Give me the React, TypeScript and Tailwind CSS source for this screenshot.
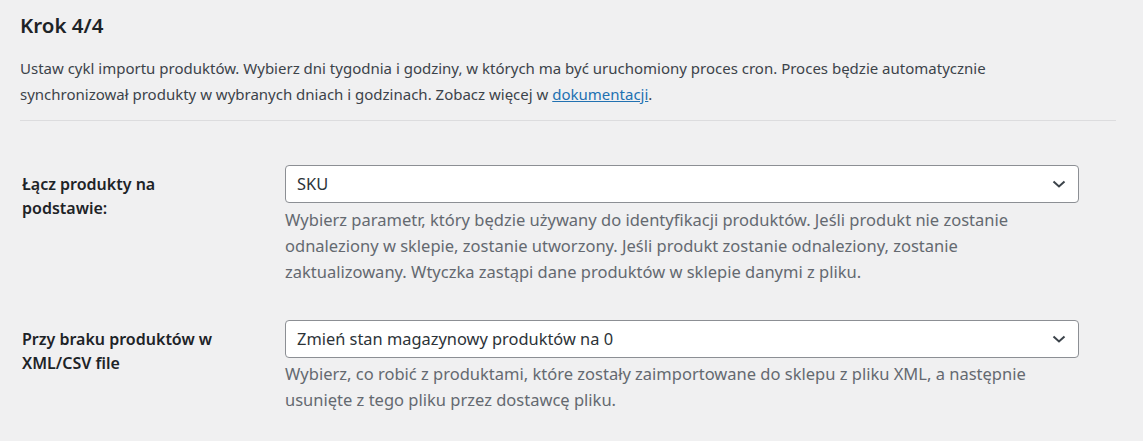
import React from 'react';

function Chevron() {
  return (
    <svg width="14" height="8" viewBox="0 0 14 8" className="absolute right-[12px] top-1/2 -translate-y-1/2">
      <path d="M1.5 1.5 L7 6.5 L12.5 1.5" fill="none" stroke="#3c434a" strokeWidth="2" />
    </svg>
  );
}

function SelectField({ value }: { value: string }) {
  return (
    <div className="relative h-[38px] w-[794px] rounded-[4px] border border-[#8c8f94] bg-white">
      <div className="flex h-full items-center pl-[11px] text-[16.4px] text-[#2c3338]">{value}</div>
      <Chevron />
    </div>
  );
}

export default function App() {
  return (
    <div className="min-h-[441px] w-[1143px] bg-[#f0f0f1] pl-[20px] pr-[27px] text-[#3c434a]" style={{ fontFamily: '"Noto Sans", "Open Sans", sans-serif' }}>
      <h2 className="pt-[12px] text-[20.5px] font-semibold leading-[26px] text-[#1d2327]">Krok 4/4</h2>
      <p className="mt-[17px] max-w-[1060px] text-[15px] leading-[26px]">
        Ustaw cykl importu produktów. Wybierz dni tygodnia i godziny, w których ma być uruchomiony proces cron. Proces będzie automatycznie synchronizował produkty w wybranych dniach i godzinach. Zobacz więcej w{' '}
        <a href="#" className="text-[#2271b1] underline">dokumentacji</a>.
      </p>
      <div className="mt-[13px] h-px w-[1096px] bg-[#dcdcde]" />

      <div className="mt-[44px] flex">
        <div className="w-[265px] pl-[2px] pt-[7px] text-[16px] font-semibold leading-[24px] text-[#1d2327]">
          Łącz produkty na<br />podstawie:
        </div>
        <div className="w-[794px]">
          <SelectField value="SKU" />
          <p className="mt-[4px] w-[775px] text-[16.5px] leading-[26px] text-[#646970]">
            Wybierz parametr, który będzie używany do identyfikacji produktów. Jeśli produkt nie zostanie odnaleziony w sklepie, zostanie utworzony. Jeśli produkt zostanie odnaleziony, zostanie zaktualizowany. Wtyczka zastąpi dane produktów w sklepie danymi z pliku.
          </p>
        </div>
      </div>

      <div className="mt-[35px] flex">
        <div className="w-[265px] pl-[2px] pt-[7px] text-[16px] font-semibold leading-[24px] text-[#1d2327]">
          Przy braku produktów w<br />XML/CSV file
        </div>
        <div className="w-[794px]">
          <SelectField value="Zmień stan magazynowy produktów na 0" />
          <p className="mt-[3px] w-[775px] text-[16.5px] leading-[26px] text-[#646970]">
            Wybierz, co robić z produktami, które zostały zaimportowane do sklepu z pliku XML, a następnie usunięte z tego pliku przez dostawcę pliku.
          </p>
        </div>
      </div>
    </div>
  );
}
